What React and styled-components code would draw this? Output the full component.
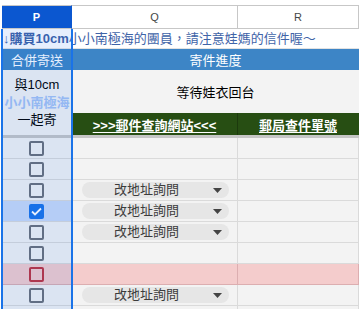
import styled, { createGlobalStyle } from 'styled-components'

const GlobalStyle = createGlobalStyle`
    * {
        box-sizing: border-box;
    }
    body {
        margin: 0;
        background: #ffffff;
        font-family: "Liberation Sans", "Noto Sans CJK TC", sans-serif;
    }
`

const Page = styled.div`
    width: 361px;
    height: 309px;
    overflow: hidden;
    padding: 5px 2px 0 2px;
`

const Sheet = styled.div`
    position: relative;
    display: grid;
    grid-template-columns: 70px 166px 121px;
`

const ColumnHeader = styled.div`
    height: 24px;
    display: flex;
    align-items: center;
    justify-content: center;
    font-size: 11px;
    border-top: 1px solid #c7c7c7;
    border-bottom: 1px solid #c7c7c7;
    border-right: 1px solid ${p => (p.$active ? '#0b57d0' : '#c7c7c7')};
    background: ${p => (p.$active ? '#0b57d0' : '#ffffff')};
    color: ${p => (p.$active ? '#ffffff' : '#444746')};
    font-weight: ${p => (p.$active ? 700 : 400)};
`

const Banner = styled.div`
    grid-column: 1 / -1;
    height: 20px;
    line-height: 19px;
    padding-left: 1px;
    font-size: 13px;
    color: #3f64a8;
    white-space: nowrap;
    background: #ffffff;
    border-bottom: 1px solid #e2e2e2;

    b {
        font-weight: 700;
    }
`

const TitleCell = styled.div`
    grid-column: ${p => (p.$span ? `span ${p.$span}` : 'auto')};
    height: 21px;
    display: flex;
    align-items: center;
    justify-content: center;
    font-size: 13px;
    color: #ffffff;
    background: #3d85c6;
`

const MergedP = styled.div`
    grid-row: span 2;
    display: flex;
    flex-direction: column;
    align-items: center;
    justify-content: center;
    background: #f3f3f3;
    font-size: 13px;
    line-height: 17.5px;
    color: #000000;
`

const Highlight = styled.span`
    color: #a4c2f4;
    font-weight: 700;
`

const StatusCell = styled.div`
    grid-column: span 2;
    height: 43px;
    display: flex;
    align-items: center;
    justify-content: center;
    font-size: 13px;
    color: #000000;
    background: #f3f3f3;
`

const LinkCell = styled.div`
    height: 22px;
    display: flex;
    align-items: center;
    justify-content: center;
    background: #274e13;
    border-right: 1px solid ${p => (p.$last ? '#274e13' : '#1c3a0d')};
    font-size: 13px;
    font-weight: 700;
    color: #ffffff;
    text-decoration: underline;
    text-underline-offset: 2px;
`

const Divider = styled.div`
    grid-column: 1 / -1;
    height: 3px;
    background: #c6c6c6;
`

const Cell = styled.div`
    height: 21px;
    display: flex;
    align-items: center;
    justify-content: ${p => (p.$center ? 'center' : 'flex-start')};
    background: ${p => (p.$red ? '#f4cccc' : p.$checked ? '#c9daf8' : '#f3f3f3')};
    border-bottom: 1px solid ${p => (p.$red ? '#dcaeb0' : '#dadada')};
    border-right: 1px solid ${p => (p.$red ? '#dcaeb0' : '#dadada')};
    padding-left: ${p => (p.$center ? '0' : '10px')};
`

const Box = styled.span`
    width: 15px;
    height: 15px;
    border-radius: 2px;
    display: flex;
    align-items: center;
    justify-content: center;
    border: 2px solid ${p => (p.$checked ? '#1a73e8' : p.$red ? '#c0333f' : '#6b7079')};
    background: ${p => (p.$checked ? '#1a73e8' : 'transparent')};
`

const Chip = styled.div`
    width: 147px;
    height: 16px;
    border-radius: 8px;
    background: #e6e6e6;
    display: flex;
    align-items: center;
`

const ChipLabel = styled.span`
    flex: 1;
    text-align: center;
    font-size: 13px;
    color: #3c3c3c;
    line-height: 16px;
`

const ChipArrow = styled.svg`
    width: 9px;
    height: 5px;
    margin: 1px 7px 0 2px;
`

const Selection = styled.div`
    position: absolute;
    left: -1px;
    top: 24px;
    bottom: -40px;
    width: 72px;
    border-left: 2px solid #1a73e8;
    border-right: 2px solid #1a73e8;
    background: rgba(14, 101, 235, 0.1);
    pointer-events: none;
`

const rows = [
    {},
    {},
    { chip: true },
    { chip: true, checked: true },
    { chip: true },
    {},
    { red: true },
    { chip: true },
    {},
]

function Checkbox({ checked, red }) {
    return (
        <Box $checked={checked} $red={red}>
            {checked && (
                <svg width='11' height='9' viewBox='0 0 11 9'>
                    <path d='M1 4.5 L4 7.5 L10 1.5' fill='none' stroke='#ffffff' strokeWidth='1.8' />
                </svg>
            )}
        </Box>
    )
}

function App() {
    return (
        <Page>
            <GlobalStyle />
            <Sheet>
                <ColumnHeader $active>P</ColumnHeader>
                <ColumnHeader>Q</ColumnHeader>
                <ColumnHeader>R</ColumnHeader>

                <Banner>
                    <b>↓購買10cm</b>小小南極海的團員，請注意娃媽的信件喔～
                </Banner>

                <TitleCell>合併寄送</TitleCell>
                <TitleCell $span={2}>寄件進度</TitleCell>

                <MergedP>
                    <span>與10cm</span>
                    <Highlight>小小南極海</Highlight>
                    <span>一起寄</span>
                </MergedP>
                <StatusCell>等待娃衣回台</StatusCell>
                <LinkCell>&gt;&gt;&gt;郵件查詢網站&lt;&lt;&lt;</LinkCell>
                <LinkCell $last>郵局查件單號</LinkCell>

                <Divider />

                {rows.map((row, i) => [
                    <Cell key={`p${i}`} $center $red={row.red} $checked={row.checked}>
                        <Checkbox checked={row.checked} red={row.red} />
                    </Cell>,
                    <Cell key={`q${i}`} $red={row.red}>
                        {row.chip && (
                            <Chip>
                                <ChipLabel>改地址詢問</ChipLabel>
                                <ChipArrow viewBox='0 0 9 5'>
                                    <path d='M0 0 H9 L4.5 5 Z' fill='#444444' />
                                </ChipArrow>
                            </Chip>
                        )}
                    </Cell>,
                    <Cell key={`r${i}`} $red={row.red} />,
                ])}

                <Selection />
            </Sheet>
        </Page>
    )
}

export default App
